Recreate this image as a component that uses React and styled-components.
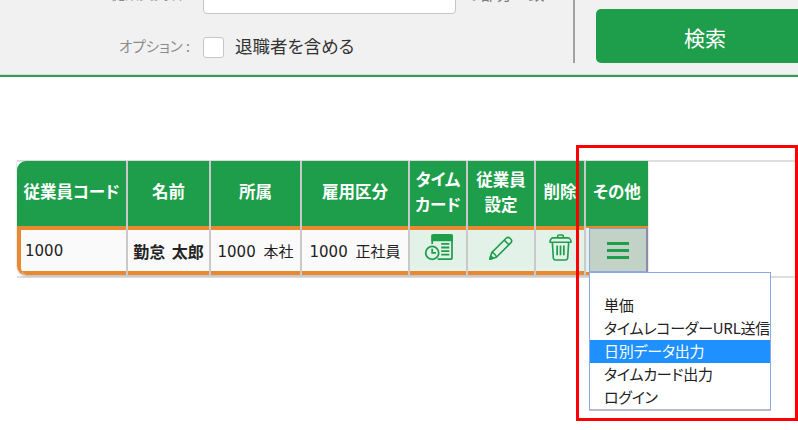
import styled, { createGlobalStyle } from "styled-components"

const GREEN = "#1e9e4b"
const ORANGE = "#e8892f"
const DIVIDER = "#c9c9c9"
const LIGHT_GREEN = "#e3f2e8"

const GlobalStyle = createGlobalStyle`
  html, body {
    margin: 0;
    padding: 0;
    background: #fff;
  }
  body {
    font-family: "Noto Sans CJK JP", "Noto Sans", sans-serif;
    font-feature-settings: "palt";
    color: #222;
  }
`

const Page = styled.div`
  position: relative;
  width: 798px;
  height: 430px;
  overflow: hidden;
  background: #fff;
`

const SearchPanel = styled.div`
  display: flex;
  height: 75px;
  overflow: hidden;
  background: #f1f1f1;
  border-bottom: 2px solid #2c9f56;
  box-shadow: inset 0 -1px 0 #dcdcdc;
`

const FormColumn = styled.div`
  display: flex;
  flex-direction: column;
  justify-content: flex-end;
  gap: 23px;
  width: 573px;
  padding-bottom: 17px;
  box-sizing: border-box;
  flex-shrink: 0;
`

const FormRow = styled.div`
  display: grid;
  grid-template-columns: 190px 21px auto;
  column-gap: 13px;
  align-items: center;
  height: ${(p) => p.$height}px;
`

const FieldLabel = styled.div`
  padding-bottom: ${(p) => p.$lift}px;
  font-size: 14.5px;
  line-height: 1;
  color: #8a8a8a;
  text-align: right;
  white-space: nowrap;
`

const TextInput = styled.div`
  grid-column: 2 / 4;
  width: 253px;
  height: 30px;
  box-sizing: border-box;
  background: #fff;
  border: 1px solid #c6c6c6;
  border-radius: 4px;
`

const InputSuffix = styled.div`
  position: absolute;
  left: 465px;
  top: -19px;
  font-size: 16px;
  color: #7c7c7c;
  white-space: nowrap;
`

const Checkbox = styled.div`
  width: 21px;
  height: 21px;
  box-sizing: border-box;
  background: #fff;
  border: 1px solid #c6c6c6;
  border-radius: 3px;
`

const CheckboxLabel = styled.div`
  margin-left: -2px;
  padding-bottom: 4px;
  font-size: 17.5px;
  line-height: 1;
  color: #333;
  white-space: nowrap;
`

const PanelDivider = styled.div`
  width: 2px;
  height: 63px;
  background: #a2a2a2;
  flex-shrink: 0;
`

const SearchButton = styled.button`
  flex-shrink: 0;
  width: 218px;
  height: 54px;
  margin: 9px 0 0 21px;
  padding: 1px 0 0;
  border: 0;
  border-radius: 5px;
  background: ${GREEN};
  color: #fff;
  font-family: inherit;
  font-size: 21px;
`

const TableArea = styled.div`
  margin: 83px 0 0 17px;
  border-top: 2px solid #dedede;
  border-bottom: 2px solid #dedede;
`

const Table = styled.div`
  width: 631px;
  margin: -1px 0 1px;
  border-bottom-left-radius: 9px;
  box-shadow: 0 1px 2px rgba(0, 0, 0, 0.3);
`

const HeaderRow = styled.div`
  display: grid;
  grid-template-columns: 111px 83px 91px 108px 58px 68px 50px 62px;
  height: 65px;
  border-top-left-radius: 9px;
  background: ${GREEN};
`

const HeaderCell = styled.div`
  display: flex;
  align-items: center;
  justify-content: center;
  box-sizing: border-box;
  padding-bottom: 4px;
  color: #fff;
  font-size: 16.5px;
  font-weight: 700;
  line-height: 25px;
  text-align: center;
  white-space: nowrap;
  border-right: 2px solid ${DIVIDER};

  &:last-child {
    border-right: 0;
  }
`

const BodyRow = styled.div`
  display: grid;
  grid-template-columns: 107px 83px 91px 108px 58px 68px 50px 62px;
  height: 49px;
  box-sizing: border-box;
  overflow: hidden;
  border-left: 4px solid ${ORANGE};
  border-bottom-left-radius: 9px;
`

const BodyCell = styled.div`
  display: flex;
  align-items: center;
  justify-content: ${(p) => (p.$left ? "flex-start" : "center")};
  box-sizing: border-box;
  padding-left: ${(p) => (p.$left ? "4px" : "0")};
  padding-bottom: ${(p) => (p.$icon ? "6px" : "0")};
  font-family: "DejaVu Sans", "Noto Sans CJK JP", sans-serif;
  font-size: 15px;
  word-spacing: 3px;
  white-space: nowrap;
  color: #222;
  background: ${(p) => (p.$icon ? LIGHT_GREEN : "#fafafa")};
  border-right: 2px solid ${DIVIDER};
  box-shadow: inset 0 4px 0 ${ORANGE}, inset 0 -4px 0 ${ORANGE};
`

const NameCell = styled(BodyCell)`
  font-family: "Noto Sans CJK JP", sans-serif;
  font-size: 16px;
  font-weight: 700;
`

const MenuCell = styled.div`
  display: flex;
  box-sizing: border-box;
  padding: 2px 0 3px 3px;
  background: ${LIGHT_GREEN};
  box-shadow: inset 0 2px 0 ${ORANGE}, inset 0 -3px 0 ${ORANGE};
`

const MenuButton = styled.div`
  flex: 1;
  display: flex;
  flex-direction: column;
  align-items: center;
  justify-content: center;
  gap: 4px;
  box-sizing: border-box;
  background: #c3d2c7;
  border: 1px solid #8fa9dc;
  border-top-color: #8f98bd;
  border-right: 2px solid #8a8ca8;
`

const HamburgerBar = styled.span`
  display: block;
  width: 22px;
  height: 3px;
  background: ${GREEN};
`

const Dropdown = styled.ul`
  position: absolute;
  left: 589px;
  top: 272px;
  width: 182px;
  margin: 0;
  padding: 21px 0 0;
  list-style: none;
  box-sizing: border-box;
  background: #fff;
  border: 1px solid #8aa9e2;
  border-bottom: 2px solid #b5bcca;
`

const DropdownItem = styled.li`
  height: 23px;
  padding-left: 14px;
  font-size: 15px;
  line-height: 21px;
  letter-spacing: -0.25px;
  white-space: nowrap;
  color: ${(p) => (p.$active ? "#fff" : "#222")};
  background: ${(p) => (p.$active ? "#1e90ff" : "transparent")};
`

const RedMark = styled.div`
  position: absolute;
  left: 576px;
  top: 145px;
  width: 222px;
  height: 276px;
  box-sizing: border-box;
  border: 3px solid #f00;
  pointer-events: none;
`

function TimecardIcon() {
  return (
    <svg width="29" height="27" viewBox="0 0 32 30" fill="none" stroke={GREEN} strokeWidth="1.9">
      <path d="M9 11V3a2 2 0 0 1 2-2h18a2 2 0 0 1 2 2v23a2 2 0 0 1-2 2H15" />
      <path d="M9 1.500h22V7H9z" fill={GREEN} />
      <path d="M19 11h9M19 15h9M19 19h9M19 23h9" strokeWidth="2" />
      <circle cx="9" cy="21" r="7.200" fill={LIGHT_GREEN} strokeWidth="2" />
      <path d="M9 16.500V21h4.200" strokeWidth="2" />
    </svg>
  )
}

function PencilIcon() {
  return (
    <svg width="26" height="26" viewBox="0 0 28 28" fill="none" stroke={GREEN} strokeWidth="1.7" strokeLinejoin="round">
      <path d="M2 26l2-7L19.500 3.500a3 3 0 0 1 4.200 0l.8.8a3 3 0 0 1 0 4.200L9 24z" />
      <path d="M4 19c2 0 5 3 5 5M17.500 5.500l5 5" />
      <path d="M2 26l1-3.600 2.600 2.600z" fill={GREEN} />
    </svg>
  )
}

function TrashIcon() {
  return (
    <svg width="23" height="27" viewBox="0 0 24 28" fill="none" stroke={GREEN} strokeWidth="1.7" strokeLinejoin="round">
      <path d="M9 4V2.500A1.500 1.500 0 0 1 10.500 1h3A1.500 1.500 0 0 1 15 2.500V4" />
      <path d="M1 8.500c0-2.500 1.500-4.500 3-4.500h16c1.500 0 3 2 3 4.500z" />
      <path d="M3.500 8.500l1 16.500a2.500 2.500 0 0 0 2.500 2h10a2.500 2.500 0 0 0 2.500-2l1-16.500" />
      <path d="M8.500 12v10M12 12v10M15.500 12v10" strokeWidth="1.8" />
    </svg>
  )
}

const headers = [
  ["従業員コード"],
  ["名前"],
  ["所属"],
  ["雇用区分"],
  ["タイム", "カード"],
  ["従業員", "設定"],
  ["削除"],
  ["その他"],
]

const menuItems = ["単価", "タイムレコーダーURL送信", "日別データ出力", "タイムカード出力", "ログイン"]

export default function App() {
  return (
    <Page>
      <GlobalStyle />
      <SearchPanel>
        <FormColumn>
          <FormRow $height={30}>
            <FieldLabel $lift={12}>従業員氏名 :</FieldLabel>
            <TextInput />
          </FormRow>
          <FormRow $height={21}>
            <FieldLabel $lift={4}>オプション :</FieldLabel>
            <Checkbox />
            <CheckboxLabel>退職者を含める</CheckboxLabel>
          </FormRow>
        </FormColumn>
        <InputSuffix>の部分一致</InputSuffix>
        <PanelDivider />
        <SearchButton>検索</SearchButton>
      </SearchPanel>

      <TableArea>
        <Table>
          <HeaderRow>
            {headers.map((lines) => (
              <HeaderCell key={lines[0]}>
                <span>
                  {lines.map((line) => (
                    <div key={line}>{line}</div>
                  ))}
                </span>
              </HeaderCell>
            ))}
          </HeaderRow>
          <BodyRow>
            <BodyCell $left>1000</BodyCell>
            <NameCell>勤怠 太郎</NameCell>
            <BodyCell>1000 本社</BodyCell>
            <BodyCell>1000 正社員</BodyCell>
            <BodyCell $icon>
              <TimecardIcon />
            </BodyCell>
            <BodyCell $icon>
              <PencilIcon />
            </BodyCell>
            <BodyCell $icon>
              <TrashIcon />
            </BodyCell>
            <MenuCell>
              <MenuButton>
                <HamburgerBar />
                <HamburgerBar />
                <HamburgerBar />
              </MenuButton>
            </MenuCell>
          </BodyRow>
        </Table>
      </TableArea>

      <Dropdown>
        {menuItems.map((item) => (
          <DropdownItem key={item} $active={item === "日別データ出力"}>
            {item}
          </DropdownItem>
        ))}
      </Dropdown>
      <RedMark />
    </Page>
  )
}
